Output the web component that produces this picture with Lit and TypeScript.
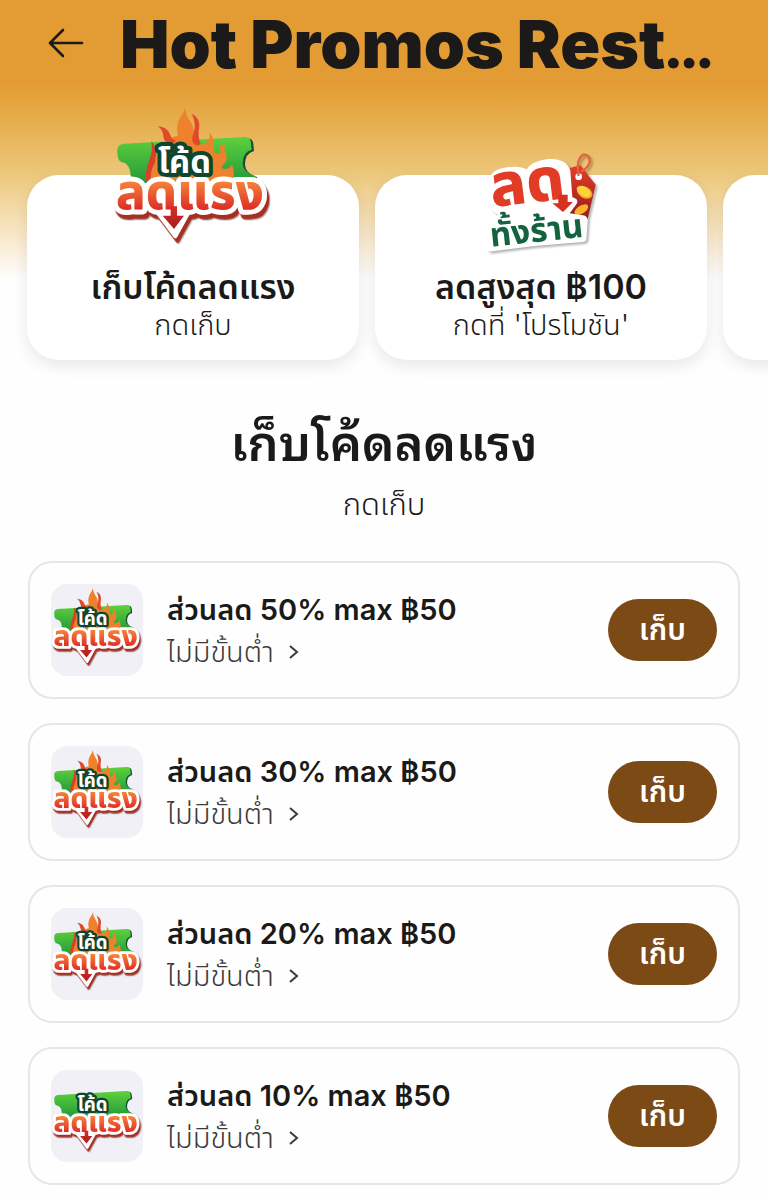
import { LitElement, html, css, svg, nothing } from "lit";
import { customElement, property } from "lit/decorators.js";

@customElement("code-logo")
class CodeLogo extends LitElement {
  @property() box = "0 0 570 480";
  @property({ type: Boolean }) plain = false;

  static styles = css`
    :host { display: block; }
    svg { display: block; width: 100%; height: 100%; overflow: visible; }
    text {
      font-family: "Noto Sans Thai", "Noto Sans", sans-serif;
      paint-order: stroke;
      stroke-linejoin: round;
    }
    .small { font-size: 98px; font-weight: 700; }
    .large { font-size: 147px; font-weight: 800; }
    .depth { filter: drop-shadow(7px 14px 0 #a62f24) drop-shadow(3px 3px 2px rgb(0 0 0 / 0.25)); }
  `;

  private flames() {
    return svg`
      <path fill="#d8402a" d="M160 138 Q182 160 170 205 Q160 235 165 262 L146 262 Q138 235 152 200 Q166 170 160 138Z"/>
      <path fill="#f0812c" d="M160 262 Q152 236 172 200 Q170 158 218 146 Q205 128 240 122 Q232 92 246 68 Q258 52 261 38 Q264 62 274 74 Q290 96 288 126 L296 150 Q322 150 332 136 Q338 128 334 112 Q350 130 347 152 Q345 172 358 178 Q372 176 366 156 Q366 146 384 150 Q374 160 384 178 Q392 196 374 210 Q366 222 382 222 Q398 220 402 206 Q412 236 404 262Z"/>
      <path fill="#e2492b" d="M179 93 Q208 96 216 118 Q222 136 234 136 Q226 148 210 144 Q196 138 196 122 Q194 104 179 93Z"/>
      <path fill="#e2492b" d="M281 56 Q306 68 304 94 Q298 126 308 146 Q296 158 284 142 Q280 132 287 114 Q296 86 281 56Z"/>
    `;
  }

  render() {
    return html`
      <svg viewBox=${this.box} role="img" aria-label="โค้ดลดแรง">
        <defs>
          <linearGradient id="green" x1="0" y1="0" x2="0" y2="1">
            <stop offset="0" stop-color="#5fd03c" />
            <stop offset="1" stop-color="#219a3a" />
          </linearGradient>
          <linearGradient id="red" gradientUnits="userSpaceOnUse" x1="0" y1="262" x2="0" y2="345">
            <stop offset="0" stop-color="#f5803a" />
            <stop offset="1" stop-color="#dd2a25" />
          </linearGradient>
          <linearGradient id="tip" x1="0" y1="0" x2="0" y2="1">
            <stop offset="0" stop-color="#dd2a25" />
            <stop offset="1" stop-color="#a31f20" />
          </linearGradient>
        </defs>
        <path fill="#145032" transform="translate(7 4)" d="M400 130 L438 126 Q458 124 459 144 L461 164 Q434 170 434 206 Q436 232 470 242 L474 264 L400 264Z" />
        <path fill="url(#green)" d="M58 168 Q56 150 76 146 L438 126 Q458 124 459 144 L461 164 Q434 170 434 206 Q436 232 470 242 L474 264 L98 264 Q102 206 72 202 Q58 200 58 168Z" />
        ${this.plain ? nothing : this.flames()}
        <text class="small" x="180" y="233" fill="#fff" stroke="#0d4630" stroke-width="24">โค้ด</text>
        <g class="depth">
          <path fill="#fff" stroke="#fff" stroke-width="12" stroke-linejoin="round" d="M172 344 L276 344 L232 424Z" />
          <text class="large" x="54" y="342" fill="url(#red)" stroke="#fff" stroke-width="30">ลดแรง</text>
        </g>
        <path fill="url(#tip)" d="M218 334 H237 V362 H258 L228 402 L194 362 H218Z" />
      </svg>
    `;
  }
}

@customElement("store-logo")
class StoreLogo extends LitElement {
  static styles = css`
    :host { display: block; }
    svg {
      display: block;
      width: 100%;
      height: 100%;
      overflow: visible;
      filter: drop-shadow(2px 2px 1px rgb(0 0 0 / 0.3));
    }
    text { font-family: "Noto Sans Thai", "Noto Sans", sans-serif; }
    .large { font-size: 180px; font-weight: 800; }
    .small { font-size: 100px; font-weight: 700; }
  `;

  render() {
    return html`
      <svg viewBox="0 0 420 360" role="img" aria-label="ลดทั้งร้าน">
        <defs>
          <linearGradient id="tag" x1="0" y1="0" x2="0" y2="1">
            <stop offset="0" stop-color="#e53d2b" />
            <stop offset="1" stop-color="#941c1c" />
          </linearGradient>
        </defs>
        <path fill="url(#tag)" d="M296 84 L328 76 L374 134 L350 236 L280 236Z" />
        <circle cx="323" cy="110" r="10" fill="#fff" />
        <path fill="none" stroke="#e4633f" stroke-width="7" d="M323 108 Q314 58 336 44 Q358 42 356 66 Q350 86 330 94" />
        <ellipse cx="341" cy="157" rx="25" ry="17" fill="#f5a31f" transform="rotate(32 341 157)" />
        <ellipse cx="338" cy="154" rx="23" ry="14" fill="#ffd13a" transform="rotate(32 338 154)" />
        <ellipse cx="331" cy="209" rx="23" ry="12" fill="#f8b32a" transform="rotate(-32 331 209)" />
        <path fill="#fff" d="M56 118 Q60 88 108 82 Q146 76 168 88 Q182 62 234 57 Q286 54 298 92 L304 172 Q328 178 314 196 L296 220 L336 226 Q350 228 350 242 L346 298 Q344 306 334 306 L190 318 L64 334 Q46 336 48 318 L50 254 Q54 238 70 234 L82 224 Q58 214 58 186Z" />
        <text class="large" transform="translate(64 202) rotate(-7)" fill="#e23b26">ลด</text>
        <path fill="#d8301f" d="M262 164 H290 V186 H306 L276 216 L244 190 H262Z" />
        <text class="small" transform="translate(60 320) rotate(-6)" fill="#14633f">ทั้งร้าน</text>
      </svg>
    `;
  }
}

@customElement("app-root")
class AppRoot extends LitElement {
  private coupons = [50, 30, 20, 10];

  static styles = css`
    :host {
      display: block;
      min-height: 100vh;
      overflow: hidden;
      background: linear-gradient(#e39c33 0, #e39c33 84px, #e6ad4c 120px, #ecc679 172px, #f6e3bd 225px, #fefefe 280px);
      color: #1b1a19;
      font-family: Inter, "Noto Sans Thai", "Noto Sans", sans-serif;
    }
    * { box-sizing: border-box; }
    h1, h2, h3, p, ul { margin: 0; padding: 0; }
    header {
      display: flex;
      align-items: center;
      gap: 32px;
      height: 88px;
      padding: 0 44px;
    }
    .back {
      display: flex;
      padding: 0;
      border: 0;
      background: none;
      color: inherit;
    }
    .back svg { width: 44px; height: 44px; }
    h1 {
      min-width: 0;
      padding-bottom: 2px;
      white-space: nowrap;
      font-size: 66px;
      line-height: 80px;
      font-weight: 900;
    }
    .dots { font-family: Lato, sans-serif; }
    .cards {
      display: flex;
      gap: 16px;
      padding: 87px 27px 40px;
      overflow: hidden;
      list-style: none;
    }
    .card {
      flex: 0 0 46.5%;
      display: flex;
      flex-direction: column;
      align-items: center;
      height: 185px;
      border-radius: 32px;
      background: #fff;
      box-shadow: 0 6px 16px rgb(0 0 0 / 0.09);
      text-align: center;
    }
    .art {
      display: flex;
      justify-content: center;
      align-items: flex-end;
      height: 170px;
      margin-top: -80px;
    }
    .art code-logo { width: 190px; height: 160px; margin-bottom: 10px; }
    .art store-logo { width: 140px; height: 120px; margin-bottom: 5px; }
    .card h3 { font-size: 34px; line-height: 44px; font-weight: 600; }
    .card p { font-size: 29px; line-height: 32px; font-weight: 300; }
    .intro { padding: 12px 28px 0; text-align: center; }
    .intro h2 {
      font-family: Inter, "Noto Sans Thai Looped", "Noto Sans Thai", "Noto Sans", sans-serif;
      font-size: 49px;
      line-height: 64px;
      font-weight: 600;
    }
    .intro p { margin-top: 8px; font-size: 31px; line-height: 40px; font-weight: 300; }
    .list {
      display: flex;
      flex-direction: column;
      gap: 24px;
      padding: 37px 28px 16px;
      list-style: none;
    }
    .row {
      display: flex;
      align-items: center;
      gap: 24px;
      height: 138px;
      padding: 0 21px;
      border: 2px solid #e6e6e8;
      border-radius: 24px;
      background: #fefefe;
    }
    .thumb {
      flex: none;
      width: 92px;
      height: 92px;
      border-radius: 16px;
      background: #f1f0f6;
    }
    .info { flex: 1; min-width: 0; padding-top: 2px; }
    .info h3 { font-size: 29px; line-height: 42px; font-weight: 600; white-space: nowrap; }
    .info a {
      display: flex;
      align-items: center;
      gap: 14px;
      color: #3c3b3b;
      font-size: 29px;
      line-height: 42px;
      font-weight: 300;
      text-decoration: none;
    }
    .info svg { width: 12px; height: 16px; }
    .claim {
      flex: none;
      width: 109px;
      height: 62px;
      padding: 2px 0 0;
      border: 0;
      border-radius: 31px;
      background: #7c4a15;
      color: #fff;
      font: inherit;
      font-size: 30px;
      font-weight: 600;
    }
  `;

  render() {
    return html`
      <header>
        <button class="back" aria-label="Back">
          <svg viewBox="0 0 44 44" fill="none" stroke="currentColor" stroke-width="2.6" stroke-linecap="round" stroke-linejoin="round">
            <path d="M38 21 H6 M19 8 L6 21 L19 34" />
          </svg>
        </button>
        <h1>Hot Promos Rest<span class="dots">...</span></h1>
      </header>
      <ul class="cards">
        <li class="card">
          <div class="art"><code-logo></code-logo></div>
          <h3>เก็บโค้ดลดแรง</h3>
          <p>กดเก็บ</p>
        </li>
        <li class="card">
          <div class="art"><store-logo></store-logo></div>
          <h3>ลดสูงสุด ฿100</h3>
          <p>กดที่ 'โปรโมชัน'</p>
        </li>
        <li class="card"></li>
      </ul>
      <section class="intro">
        <h2>เก็บโค้ดลดแรง</h2>
        <p>กดเก็บ</p>
      </section>
      <ul class="list">
        ${this.coupons.map(
          (percent) => html`
            <li class="row">
              <code-logo class="thumb" box="41 15 484 484" ?plain=${percent === 10}></code-logo>
              <div class="info">
                <h3>ส่วนลด ${percent}% max ฿50</h3>
                <a href="#">
                  ไม่มีขั้นต่ำ
                  <svg viewBox="0 0 12 16" fill="none" stroke="currentColor" stroke-width="2"><path d="M2 2 L9 8 L2 14" /></svg>
                </a>
              </div>
              <button class="claim">เก็บ</button>
            </li>
          `
        )}
      </ul>
    `;
  }
}
